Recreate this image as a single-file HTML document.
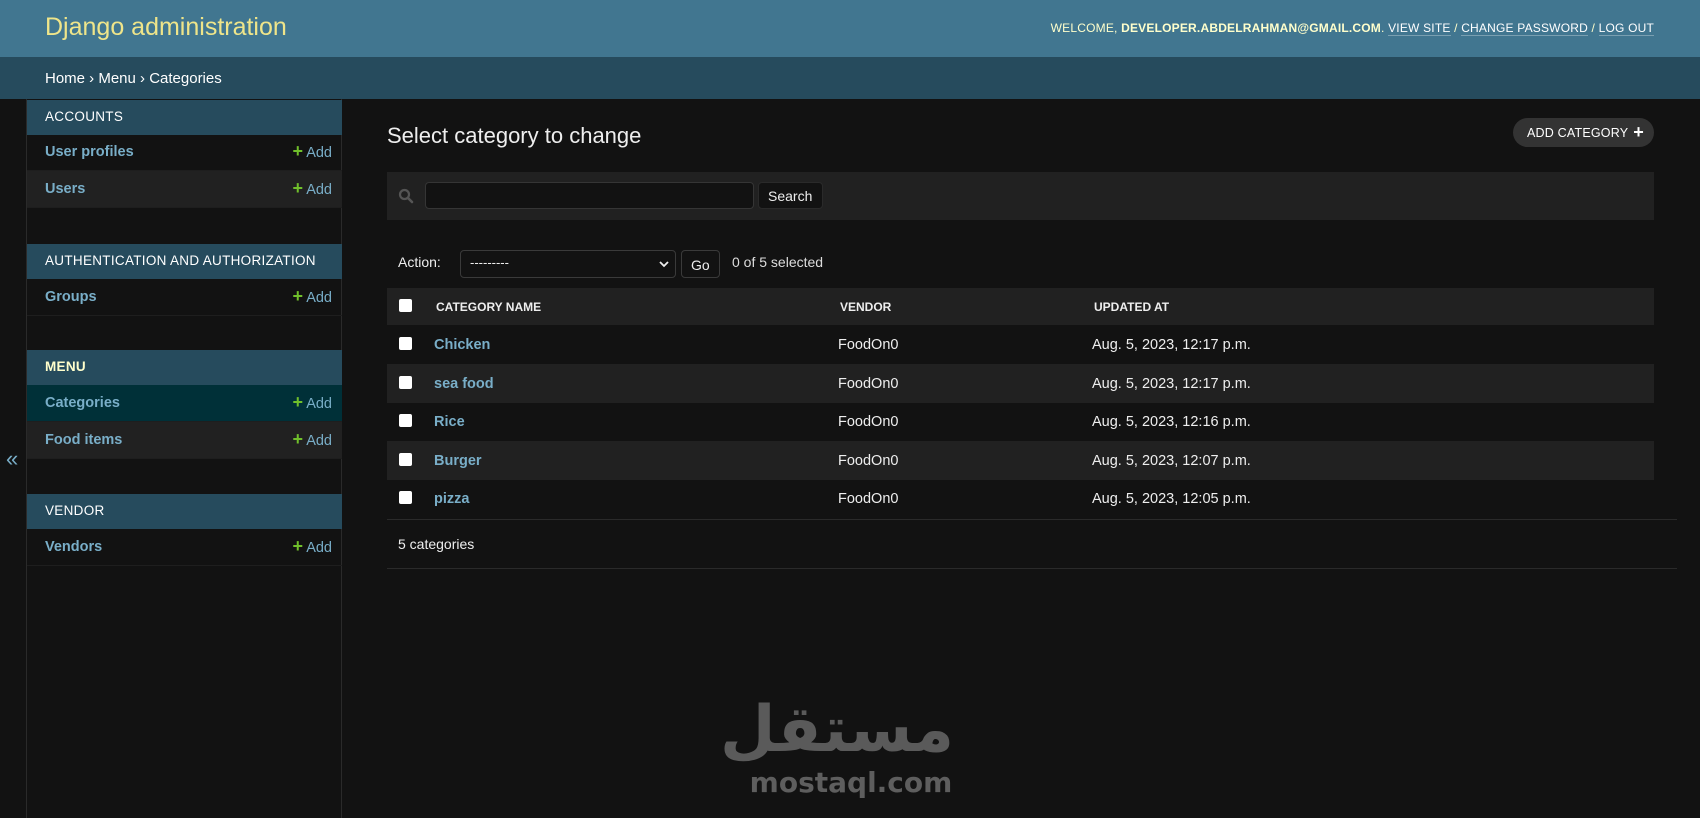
<!DOCTYPE html>
<html><head><meta charset="utf-8">
<style>
*{box-sizing:border-box;margin:0;padding:0}
body{width:1700px;height:818px;overflow:hidden;background:#121212;font-family:"Liberation Sans",Arial,sans-serif;color:#eee;position:relative}
.a{position:absolute}
#hdr{left:0;top:0;width:1700px;height:57px;background:#417690}
#brand{left:45px;top:13px;font-size:25px;color:#efe58a;font-weight:normal}
#user{right:46px;top:21px;font-size:12px;color:#ffc;text-transform:uppercase;letter-spacing:0.2px}
#user a{color:#fff;text-decoration:none;border-bottom:1px solid rgba(255,255,255,.3)}
#bc{left:0;top:57px;width:1700px;height:42px;background:#264b5d}
#bct{left:45px;top:70px;font-size:15px;color:#fff}
#strip{left:0;top:99px;width:27px;height:719px;border-right:1px solid #2a2a2a}
#tog{left:6px;top:446px;color:#79aec8;font-size:22px}
#side{left:27px;top:99px;width:315px;height:719px;border-right:1px solid #2a2a2a}
.cap{position:absolute;left:27px;width:315px;height:35px;background:#264b5d;color:#fff;font-size:13.5px;padding:9px 0 0 18px;letter-spacing:.3px}
.row{position:absolute;left:27px;width:315px;height:37px;border-bottom:1px solid #1e1e1e;font-size:14.5px;font-weight:bold;color:#79aec8;padding:10px 0 0 18px}
.row .ad{position:absolute;right:10px;top:10px;font-weight:normal;color:#79aec8}
.row .ad b{color:#70bf2b;font-size:18px;line-height:14px;font-weight:900}
.r2{background:#212121}
.sel{background:#003038}
#title{left:387px;top:123px;font-size:22px;color:#eee;font-weight:300}
#addc{left:1513px;top:118px;width:141px;height:29px;border-radius:15px;background:#333;color:#fff;font-size:12.5px;padding:8px 0 0 14px;letter-spacing:.2px}
#addc b{position:absolute;right:10px;top:5px;font-size:18px;line-height:18px}
#sb{left:387px;top:172px;width:1267px;height:48px;background:#212121}
#inp{left:425px;top:182px;width:329px;height:27px;background:#121212;border:1px solid #353535;border-radius:4px}
#sbtn{left:758px;top:182px;width:65px;height:27px;background:#121212;border:1px solid #2a2a2a;border-radius:4px;font-size:14px;color:#eee;padding:5px 0 0 9px}
#act{left:398px;top:254px;font-size:14px;color:#eee}
#selb{left:460px;top:250px;width:216px;height:28px;border:1px solid #3a3a3a;border-radius:4px;background:#121212;font-size:13px;color:#eee;padding:4px 0 0 9px}
#go{left:681px;top:250px;width:39px;height:28px;border:1px solid #3a3a3a;border-radius:4px;background:#121212;font-size:14px;padding:6px 0 0 9px}
#cnt{left:732px;top:254px;font-size:14px;color:#ddd}
#th{left:387px;top:288px;width:1267px;height:37px;background:#212121}
.tr{position:absolute;left:387px;width:1267px;height:38.5px;font-size:14.5px}
.cb{position:absolute;left:12px;top:12px;width:13px;height:13px;background:#fff;border-radius:2px}
.c1{position:absolute;left:47px;top:12px}
.c2{position:absolute;left:451px;top:12px}
.c3{position:absolute;left:705px;top:12px}
.hd{font-size:12px;font-weight:bold;color:#eee}
.nm{color:#79aec8;font-weight:bold}
#foot{left:398px;top:536px;font-size:14px;color:#eee}
.ln{position:absolute;left:387px;width:1290px;height:1px;background:#2a2a2a}
#wm1{left:748px;top:690px;width:206px;text-align:center;font-family:"DejaVu Sans",sans-serif;font-weight:bold;font-size:64px;color:#5a5a5a;line-height:80px}
#wm2{left:746px;top:766px;width:210px;text-align:center;font-family:"DejaVu Sans",sans-serif;font-weight:bold;font-size:28px;color:#5e5e5e}
</style></head><body>
<div id="hdr" class="a"></div>
<div id="brand" class="a">Django administration</div>
<div id="user" class="a">Welcome, <strong>developer.abdelrahman@gmail.com</strong>. <a>View site</a> / <a>Change password</a> / <a>Log out</a></div>
<div id="bc" class="a"></div>
<div id="bct" class="a">Home › Menu › Categories</div>
<div id="strip" class="a"></div>
<div id="tog" class="a">«</div>
<div id="side" class="a"></div>

<div class="cap" style="top:100px">ACCOUNTS</div>
<div class="row" style="top:134px">User profiles<span class="ad"><b>+</b> Add</span></div>
<div class="row r2" style="top:171px">Users<span class="ad"><b>+</b> Add</span></div>
<div class="cap" style="top:244px">AUTHENTICATION AND AUTHORIZATION</div>
<div class="row" style="top:279px">Groups<span class="ad"><b>+</b> Add</span></div>
<div class="cap" style="top:350px;color:#ffc;font-weight:bold">MENU</div>
<div class="row sel" style="top:385px">Categories<span class="ad"><b>+</b> Add</span></div>
<div class="row r2" style="top:422px">Food items<span class="ad"><b>+</b> Add</span></div>
<div class="cap" style="top:494px">VENDOR</div>
<div class="row" style="top:529px">Vendors<span class="ad"><b>+</b> Add</span></div>

<div id="title" class="a">Select category to change</div>
<div id="addc" class="a">ADD CATEGORY<b>+</b></div>
<div id="sb" class="a"></div>
<svg class="a" style="left:398px;top:188px" width="16" height="16" viewBox="0 0 16 16"><circle cx="6.5" cy="6.5" r="4.5" fill="none" stroke="#555" stroke-width="2.2"/><path d="M10 10l4 4" stroke="#555" stroke-width="2.6" stroke-linecap="round"/></svg>
<div id="inp" class="a"></div>
<div id="sbtn" class="a">Search</div>
<div id="act" class="a">Action:</div>
<div id="selb" class="a">---------<svg style="position:absolute;right:6px;top:10px" width="10" height="7" viewBox="0 0 10 7"><path d="M1 1l4 4 4-4" fill="none" stroke="#eee" stroke-width="1.8"/></svg></div>
<div id="go" class="a">Go</div>
<div id="cnt" class="a">0 of 5 selected</div>

<div id="th" class="a"><span class="cb" style="top:11px"></span><span class="c1 hd" style="left:49px">CATEGORY NAME</span><span class="c2 hd" style="left:453px">VENDOR</span><span class="c3 hd" style="left:707px">UPDATED AT</span></div>
<div class="tr" style="top:325px"><span class="cb"></span><span class="c1 nm">Chicken</span><span class="c2">FoodOn0</span><span class="c3">Aug. 5, 2023, 12:17 p.m.</span></div>
<div class="tr" style="top:364px;background:#212121"><span class="cb"></span><span class="c1 nm">sea food</span><span class="c2">FoodOn0</span><span class="c3">Aug. 5, 2023, 12:17 p.m.</span></div>
<div class="tr" style="top:402px"><span class="cb"></span><span class="c1 nm">Rice</span><span class="c2">FoodOn0</span><span class="c3">Aug. 5, 2023, 12:16 p.m.</span></div>
<div class="tr" style="top:441px;background:#212121"><span class="cb"></span><span class="c1 nm">Burger</span><span class="c2">FoodOn0</span><span class="c3">Aug. 5, 2023, 12:07 p.m.</span></div>
<div class="tr" style="top:479px"><span class="cb"></span><span class="c1 nm">pizza</span><span class="c2">FoodOn0</span><span class="c3">Aug. 5, 2023, 12:05 p.m.</span></div>
<div class="ln" style="top:519px"></div>
<div id="foot" class="a">5 categories</div>
<div class="ln" style="top:568px"></div>

<div id="wm1" class="a" dir="rtl">مستقل</div>
<div id="wm2" class="a">mostaql.com</div>
</body></html>
